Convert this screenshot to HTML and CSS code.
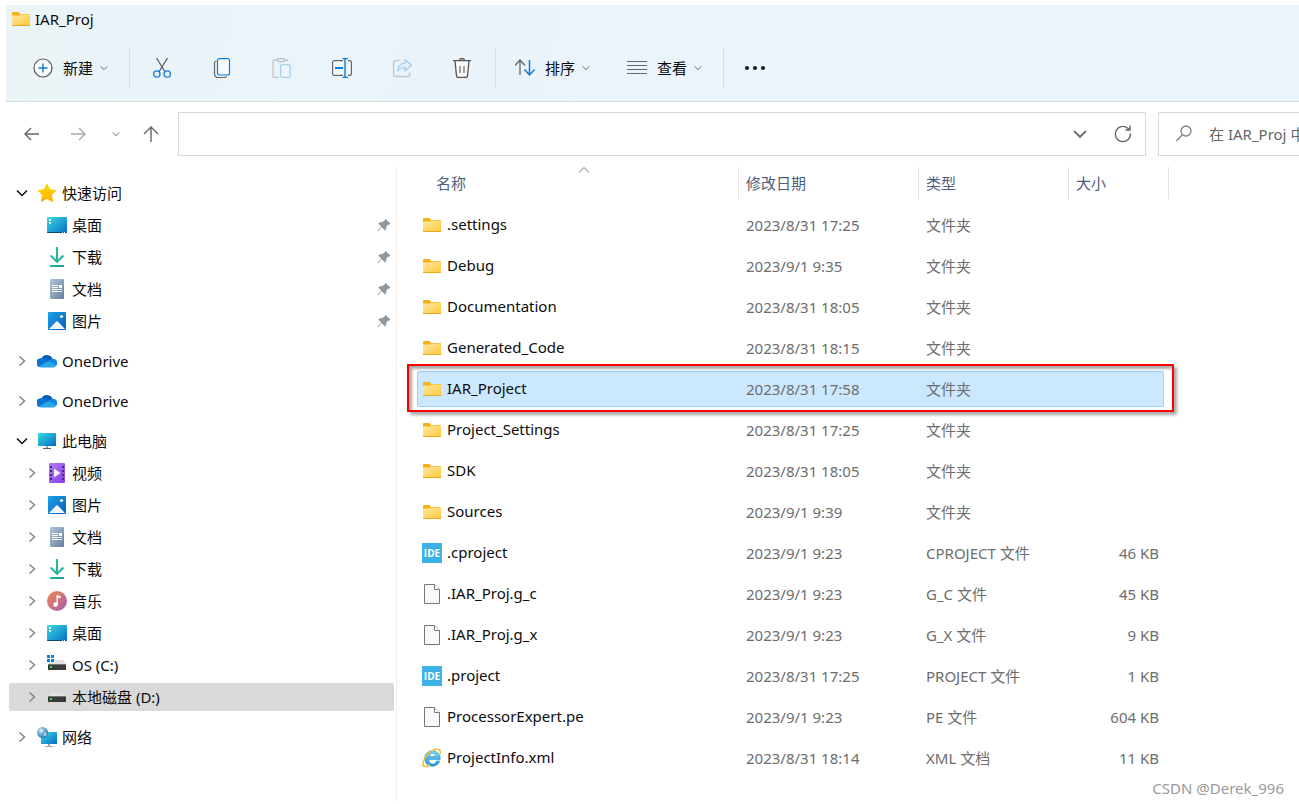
FILE: index.html
```html
<!DOCTYPE html>
<html lang="zh-CN">
<head>
<meta charset="utf-8">
<title>IAR_Proj</title>
<link rel="stylesheet" href="styles.css">
</head>
<body>
<svg class="defs" aria-hidden="true">
  <defs>
    <linearGradient id="gFolder" x1="0" y1="0" x2="1" y2="1"><stop offset="0" stop-color="#ffe9a6"/><stop offset="1" stop-color="#ffc93c"/></linearGradient>
    <linearGradient id="gScreen" x1="0" y1="0" x2="1" y2="1"><stop offset="0" stop-color="#36dbe6"/><stop offset="1" stop-color="#0b6cc4"/></linearGradient>
    <linearGradient id="gDown" x1="0" y1="0" x2="1" y2="1"><stop offset="0" stop-color="#3cc78a"/><stop offset="1" stop-color="#0f9fa6"/></linearGradient>
    <linearGradient id="gDoc" x1="0" y1="0" x2="1" y2="1"><stop offset="0" stop-color="#b3c5d8"/><stop offset="1" stop-color="#647f9f"/></linearGradient>
    <linearGradient id="gPic" x1="0" y1="0" x2="1" y2="1"><stop offset="0" stop-color="#1ba3ea"/><stop offset="1" stop-color="#0a5cb5"/></linearGradient>
    <linearGradient id="gStar" x1="0" y1="0" x2="0" y2="1"><stop offset="0" stop-color="#ffd900"/><stop offset="1" stop-color="#ffb000"/></linearGradient>
    <linearGradient id="gVideo" x1="0" y1="0" x2="1" y2="1"><stop offset="0" stop-color="#b67cf5"/><stop offset="1" stop-color="#8a3ee8"/></linearGradient>
    <linearGradient id="gMusic" x1="0" y1="0" x2="1" y2="1"><stop offset="0" stop-color="#f68a4c"/><stop offset="1" stop-color="#a05cb4"/></linearGradient>
    <radialGradient id="gGlobe" cx=".35" cy=".3" r=".8"><stop offset="0" stop-color="#b5dcf2"/><stop offset="1" stop-color="#1d6fa8"/></radialGradient>
    <linearGradient id="gIE" x1="0" y1="0" x2="0" y2="1"><stop offset="0" stop-color="#7fdcff"/><stop offset="1" stop-color="#2095dc"/></linearGradient>

    <symbol id="folder" viewBox="0 0 20 20"><path d="M1 4q0-1 1-1h5q1 0 1.400 1l.6 1h9.500q.5 0 .5.500V8H1z" fill="#f5b014"/><path d="M1 6.500h7l1.500-1H19V16H1z" fill="url(#gFolder)"/><path d="M1 16h18v1H1z" fill="#eba81a"/></symbol>
    <symbol id="star" viewBox="0 0 20 20"><path d="M10 1l2.700 5.800 6.300.8-4.700 4.300 1.300 6.600L10 15.300l-5.600 3.200 1.300-6.600L1 7.600l6.300-.8z" fill="url(#gStar)" stroke="url(#gStar)" stroke-linejoin="round"/></symbol>
    <symbol id="desktop" viewBox="0 0 20 20"><rect y="2" width="20" height="16" rx="1" fill="url(#gScreen)"/><path d="M0 17h20q0 1-1 1H1q-1 0-1-1z" fill="#074d78"/><path d="M2 4h2v2H2zM2 7h2v2H2z" fill="#fff"/><path d="M15 17h1v1h-1zM17 17h1v1h-1z" fill="#d4effa"/></symbol>
    <symbol id="download" viewBox="0 0 20 20"><path d="M9 0h2v12.500l4.700-4.700L17 9.200l-7 7-7-7 1.300-1.400L9 12.500zM3 18h14v2H3z" fill="url(#gDown)"/></symbol>
    <symbol id="doc" viewBox="0 0 20 20"><rect x="3" width="14" height="20" rx="1" fill="url(#gDoc)"/><path d="M5 6h6v1H5zM5 8h6v1H5zM12 6h3v3h-3zM5 10h10v1H5zM5 12h10v1H5z" fill="#fff"/></symbol>
    <symbol id="picture" viewBox="0 0 20 20"><rect x="1" y="1" width="18" height="18" rx="1" fill="url(#gPic)"/><path d="M2 18l7.200-7.400q.8-.7 1.600 0L18 18z" fill="#eef7ff"/><circle cx="14.500" cy="5.500" r="1.600" fill="#fff"/></symbol>
    <symbol id="cloud" viewBox="0 0 20 20"><path d="M4.500 7.500a6 6 0 0 1 11.200.8L9.500 12z" fill="#0560b6"/><path d="M4.500 7.200Q8 6.500 11.500 9.500L3 16.300A4.600 4.600 0 0 1 4.500 7.200z" fill="#0a73cf"/><path d="M10 10l5.500-2.300A4.300 4.300 0 0 1 19 15z" fill="#1489e0"/><path d="M2 15l9-4.500q5 2 8 4-1 2-3 2H5q-2 0-3-1.500z" fill="#28a4ea"/></symbol>
    <symbol id="pc" viewBox="0 0 20 20"><rect x="1" y="2" width="18" height="13" rx=".5" fill="url(#gScreen)"/><path d="M9 15h2v2H9z" fill="#9aa2a8"/><path d="M6 17h8v1H6z" fill="#4f6675"/></symbol>
    <symbol id="video" viewBox="0 0 20 20"><rect x="2" width="16" height="20" rx="1" fill="url(#gVideo)"/><path d="M3 3h2v2H3zM3 7h2v2H3zM3 11h2v2H3zM3 15h2v2H3zM15 3h2v2h-2zM15 7h2v2h-2zM15 11h2v2h-2zM15 15h2v2h-2z" fill="#4b2394"/><path d="M7 5.500l6.500 4.500L7 14.500z" fill="#f3eefb"/></symbol>
    <symbol id="music" viewBox="0 0 20 20"><circle cx="10" cy="10" r="10" fill="url(#gMusic)"/><path d="M9.500 4l4 1v2.500l-2.700-.7v6.700a2.200 2.200 0 1 1-1.300-2z" fill="#fff"/></symbol>
    <symbol id="drive" viewBox="0 0 20 20"><path d="M4 6h12l3 4H1z" fill="#e3e3e3"/><rect x="1" y="9" width="18" height="6" fill="#3c3c3c"/><path d="M1 9h18v1H1z" fill="#777"/><path d="M3 11h2v2H3z" fill="#2ee04a"/></symbol>
    <symbol id="osdrive" viewBox="0 0 20 20"><path d="M5 5h11l3 4H1z" fill="#e3e3e3"/><rect x="1" y="9" width="18" height="6" fill="#3c3c3c"/><path d="M1 9h18v1H1z" fill="#777"/><path d="M3 11h2v2H3z" fill="#2ee04a"/><path d="M0 0h3v3H0zM4 0h3v3H4zM0 4h3v3H0zM4 4h3v3H4z" fill="#0c83dc"/></symbol>
    <symbol id="network" viewBox="0 0 20 20"><rect x="4" y="5" width="16" height="12" rx=".5" fill="url(#gScreen)"/><path d="M11 17h2v2h-2zM8 19h8v1H8z" fill="#a0a8ae"/><circle cx="5.500" cy="5.500" r="5.500" fill="url(#gGlobe)"/><path d="M2 3q3-2 4 0t-2 3zM7 6q3-1 2.500 1.500T7 9z" fill="#d8eefa" opacity=".7"/></symbol>
    <symbol id="file" viewBox="0 0 20 20"><path d="M2.500.5h10l5 5v14h-15z" fill="#f9f9f9" stroke="#777"/><path d="M12.500.5v5h5" fill="#fff" stroke="#777"/></symbol>
    <symbol id="ie" viewBox="0 0 20 20"><path d="M14.300 13h3.500A7.800 7.800 0 1 1 18.200 9.800v1.600H7a3.400 3.400 0 0 0 7.300 1.600zM7 8.500h7.100a3.600 3.600 0 0 0-7.100 0z" fill="url(#gIE)" fill-rule="evenodd" stroke="#278fc9" stroke-width=".6"/><path d="M18 6.500C20-1 12 .5 6.500 5.500S-1 19 3 18.500c2 0 4-1 5-1.800" fill="none" stroke="#f3bd27" stroke-width="1.500"/></symbol>
    <symbol id="pin" viewBox="0 0 14 14"><path d="M8.500.7L13.300 5.500 12 6.700 10.500 7 9.200 9.800 9 11.700 8 12.500 4.700 9.300 1 13.300H.5v-.8l3.800-3.700L1.300 5.500l1-1 2-.2L7 3.200z" fill="#8e9aa3"/></symbol>
    <symbol id="right" viewBox="0 0 12 12"><path d="M3.500 1.500L8.500 6l-5 4.500" fill="none" stroke="#858585" stroke-width="1.500"/></symbol>
    <symbol id="down" viewBox="0 0 12 12"><path d="M1 3.500l5 5 5-5" fill="none" stroke="currentColor" stroke-width="1.500"/></symbol>
  </defs>
</svg>

<div class="window">
  <header class="ribbon">
    <h1 class="title"><svg class="icon"><use href="#folder"/></svg>IAR_Proj</h1>
    <div class="toolbar" role="toolbar" aria-label="命令">
      <button class="command command-new"><svg class="icon" viewBox="0 0 20 20" fill="none"><circle cx="10" cy="10" r="9" fill="#fafcfe" stroke="#555" stroke-width="1.200"/><path d="M10 5.500v9M5.500 10h9" stroke="#0a78d4" stroke-width="1.400"/></svg><span>新建</span><svg class="caret"><use href="#down"/></svg></button>
      <div class="tools">
        <button class="tool" aria-label="剪切"><svg class="icon" viewBox="0 0 20 20" fill="none"><path d="M4.500 0l8.300 13.500M15.500 0L7.200 13.500" stroke="#555" stroke-width="1.200"/><g stroke="#0a7ddb" stroke-width="1.300"><circle cx="4.800" cy="16" r="3.200"/><circle cx="15.200" cy="16" r="3.200"/></g></svg></button>
        <button class="tool" aria-label="复制"><svg class="icon" viewBox="0 0 20 20" fill="none"><path d="M4.500 3q-2 .5-2 2v10.500q0 4 4 4h6q1.500 0 2-1" stroke="#666" stroke-width="1.200"/><rect x="5.500" y=".6" width="12" height="16.400" rx="2" fill="#f8fafd" stroke="#0a7ddb" stroke-width="1.200"/></svg></button>
        <button class="tool" aria-label="粘贴" disabled><svg class="icon" viewBox="0 0 20 20" fill="none"><path d="M6 2H2.500Q1 2 1 3.500v14Q1 19.500 3 19.500h3.500M12 2h2.500Q16 2 16 4" stroke="#c1c6c9" stroke-width="1.300"/><rect x="5.500" y=".6" width="7" height="3" rx="1.500" stroke="#b5bbbf" stroke-width="1.200"/><rect x="8.600" y="6.600" width="9.500" height="12.800" rx="1.500" fill="#eff6fd" stroke="#a5cfee" stroke-width="1.300"/></svg></button>
        <button class="tool" aria-label="重命名"><svg class="icon" viewBox="0 0 20 20" fill="none"><path d="M11 2.600H2.500Q.6 2.600.6 4.500v11q0 1.900 1.900 1.900H11M16 2.600h1.500q1.900 0 1.900 1.900v11q0 1.900-1.900 1.900H16" stroke="#666" stroke-width="1.200" fill="#f6f9fc"/><path d="M3 10h8" stroke="#0a7ddb" stroke-width="2"/><path d="M13 .6v18.800M10.500.6h5.500M10.500 19.400h5.500" stroke="#0a7ddb" stroke-width="1.400"/></svg></button>
        <button class="tool" aria-label="共享" disabled><svg class="icon" viewBox="0 0 20 20" fill="none"><path d="M7.500 2.600h-4Q1.600 2.600 1.600 4.500v12q0 2 2 2h12q2 0 2-2v-2" stroke="#c1c6c9" stroke-width="1.300"/><path d="M13 1.500l6.500 5.700L13 13V9.500q-4.500 0-7.500 3.500Q6.500 5.500 13 5z" fill="#e4f1fc" stroke="#9ccbed" stroke-width="1.200" stroke-linejoin="round"/></svg></button>
        <button class="tool" aria-label="删除"><svg class="icon" viewBox="0 0 20 20" fill="none"><path d="M3 2.800l1.500 15q.2 1.600 1.800 1.600h7.400q1.600 0 1.800-1.600L17 2.800" fill="#fafafa" stroke="#555" stroke-width="1.300"/><path d="M1 2.700h18M7.500 2.500q.2-2 2.500-2t2.500 2" stroke="#555" stroke-width="1.300"/><path d="M8 8v7M12 8v7" stroke="#666" stroke-width="1.200"/></svg></button>
      </div>
      <div class="menus">
        <button class="command"><svg class="icon" viewBox="0 0 20 20" fill="none"><path d="M5 17V2M0 7.500L5 2l5 5.500" stroke="#666" stroke-width="1.300"/><path d="M14.500 2v15M9.500 11.500l5 5.500 5-5.500" stroke="#0a7ddb" stroke-width="1.500"/></svg><span>排序</span><svg class="caret"><use href="#down"/></svg></button>
        <button class="command"><svg class="icon" viewBox="0 0 20 20"><path d="M0 3.500h20M0 7.500h20M0 11.500h20M0 15.500h20" stroke="#666" stroke-width="1.200"/></svg><span>查看</span><svg class="caret"><use href="#down"/></svg></button>
      </div>
      <button class="more" aria-label="更多"><svg class="icon" viewBox="0 0 20 20"><g fill="#1b1b1b"><circle cx="2" cy="10" r="2"/><circle cx="10" cy="10" r="2"/><circle cx="18" cy="10" r="2"/></g></svg></button>
    </div>
  </header>

  <nav class="navbar" aria-label="导航">
    <div class="history">
      <button class="navigate" aria-label="后退"><svg class="icon" viewBox="0 0 20 20" fill="none" stroke="#666" stroke-width="1.400"><path d="M17 10H3M9 4l-6 6 6 6"/></svg></button>
      <button class="navigate" aria-label="前进"><svg class="icon" viewBox="0 0 20 20" fill="none" stroke="#aaa" stroke-width="1.400"><path d="M3 10h14M11 4l6 6-6 6"/></svg></button>
      <button class="navigate narrow" aria-label="最近的位置"><svg class="caret"><use href="#down"/></svg></button>
      <button class="navigate narrow" aria-label="向上"><svg class="icon" viewBox="0 0 20 20" fill="none" stroke="#666" stroke-width="1.400"><path d="M10 18V3M3 10l7-7 7 7"/></svg></button>
    </div>
    <div class="address">
      <input class="path" type="text" aria-label="地址">
      <button class="plain" aria-label="展开地址"><svg class="chevron"><use href="#down"/></svg></button>
      <button class="plain" aria-label="刷新"><svg class="icon" viewBox="0 0 20 20" fill="none" stroke="#666" stroke-width="1.400"><path d="M17.500 9.500a7.600 7.600 0 1 1-2.700-5.300L17 6M17 1.500V6h-4.500"/></svg></button>
    </div>
    <label class="search"><svg class="icon" viewBox="0 0 20 20" fill="none" stroke="#808080" stroke-width="1.300"><circle cx="12" cy="7" r="5"/><path d="M8.500 10.500L2.500 17"/></svg><input class="query" type="text" placeholder="在 IAR_Proj 中搜索" aria-label="搜索"></label>
  </nav>

  <div class="content">
    <aside class="sidebar">
      <ul class="group">
        <li class="node open"><svg class="toggle"><use href="#down"/></svg><svg class="icon"><use href="#star"/></svg>快速访问</li>
        <li class="node child"><svg class="toggle"></svg><svg class="icon"><use href="#desktop"/></svg>桌面<svg class="pin"><use href="#pin"/></svg></li>
        <li class="node child"><svg class="toggle"></svg><svg class="icon"><use href="#download"/></svg>下载<svg class="pin"><use href="#pin"/></svg></li>
        <li class="node child"><svg class="toggle"></svg><svg class="icon"><use href="#doc"/></svg>文档<svg class="pin"><use href="#pin"/></svg></li>
        <li class="node child"><svg class="toggle"></svg><svg class="icon"><use href="#picture"/></svg>图片<svg class="pin"><use href="#pin"/></svg></li>
      </ul>
      <ul class="group">
        <li class="node"><svg class="toggle"><use href="#right"/></svg><svg class="icon"><use href="#cloud"/></svg>OneDrive</li>
      </ul>
      <ul class="group">
        <li class="node"><svg class="toggle"><use href="#right"/></svg><svg class="icon"><use href="#cloud"/></svg>OneDrive</li>
      </ul>
      <ul class="group">
        <li class="node open"><svg class="toggle"><use href="#down"/></svg><svg class="icon"><use href="#pc"/></svg>此电脑</li>
        <li class="node child"><svg class="toggle"><use href="#right"/></svg><svg class="icon"><use href="#video"/></svg>视频</li>
        <li class="node child"><svg class="toggle"><use href="#right"/></svg><svg class="icon"><use href="#picture"/></svg>图片</li>
        <li class="node child"><svg class="toggle"><use href="#right"/></svg><svg class="icon"><use href="#doc"/></svg>文档</li>
        <li class="node child"><svg class="toggle"><use href="#right"/></svg><svg class="icon"><use href="#download"/></svg>下载</li>
        <li class="node child"><svg class="toggle"><use href="#right"/></svg><svg class="icon"><use href="#music"/></svg>音乐</li>
        <li class="node child"><svg class="toggle"><use href="#right"/></svg><svg class="icon"><use href="#desktop"/></svg>桌面</li>
        <li class="node child"><svg class="toggle"><use href="#right"/></svg><svg class="icon"><use href="#osdrive"/></svg>OS (C:)</li>
        <li class="node child current"><svg class="toggle"><use href="#right"/></svg><svg class="icon"><use href="#drive"/></svg>本地磁盘 (D:)</li>
      </ul>
      <ul class="group">
        <li class="node"><svg class="toggle"><use href="#right"/></svg><svg class="icon"><use href="#network"/></svg>网络</li>
      </ul>
    </aside>

    <main class="listing">
      <table class="files">
        <colgroup><col class="col-name"><col class="col-date"><col class="col-type"><col class="col-size"></colgroup>
        <thead>
          <tr>
            <th scope="col"><div class="heading first">名称<svg class="sorted" viewBox="0 0 12 12" fill="none" stroke="#777"><path d="M1 8.500l5-5 5 5"/></svg></div></th>
            <th scope="col"><div class="heading">修改日期</div></th>
            <th scope="col"><div class="heading">类型</div></th>
            <th scope="col"><div class="heading">大小</div></th>
          </tr>
        </thead>
        <tbody>
          <tr><td class="name"><svg class="icon"><use href="#folder"/></svg>.settings</td><td>2023/8/31 17:25</td><td>文件夹</td><td class="size"></td></tr>
          <tr><td class="name"><svg class="icon"><use href="#folder"/></svg>Debug</td><td>2023/9/1 9:35</td><td>文件夹</td><td class="size"></td></tr>
          <tr><td class="name"><svg class="icon"><use href="#folder"/></svg>Documentation</td><td>2023/8/31 18:05</td><td>文件夹</td><td class="size"></td></tr>
          <tr><td class="name"><svg class="icon"><use href="#folder"/></svg>Generated_Code</td><td>2023/8/31 18:15</td><td>文件夹</td><td class="size"></td></tr>
          <tr class="selected"><td class="name"><svg class="icon"><use href="#folder"/></svg>IAR_Project</td><td>2023/8/31 17:58</td><td>文件夹</td><td class="size"></td></tr>
          <tr><td class="name"><svg class="icon"><use href="#folder"/></svg>Project_Settings</td><td>2023/8/31 17:25</td><td>文件夹</td><td class="size"></td></tr>
          <tr><td class="name"><svg class="icon"><use href="#folder"/></svg>SDK</td><td>2023/8/31 18:05</td><td>文件夹</td><td class="size"></td></tr>
          <tr><td class="name"><svg class="icon"><use href="#folder"/></svg>Sources</td><td>2023/9/1 9:39</td><td>文件夹</td><td class="size"></td></tr>
          <tr><td class="name"><span class="icon ide">IDE</span>.cproject</td><td>2023/9/1 9:23</td><td>CPROJECT 文件</td><td class="size">46 KB</td></tr>
          <tr><td class="name"><svg class="icon"><use href="#file"/></svg>.IAR_Proj.g_c</td><td>2023/9/1 9:23</td><td>G_C 文件</td><td class="size">45 KB</td></tr>
          <tr><td class="name"><svg class="icon"><use href="#file"/></svg>.IAR_Proj.g_x</td><td>2023/9/1 9:23</td><td>G_X 文件</td><td class="size">9 KB</td></tr>
          <tr><td class="name"><span class="icon ide">IDE</span>.project</td><td>2023/8/31 17:25</td><td>PROJECT 文件</td><td class="size">1 KB</td></tr>
          <tr><td class="name"><svg class="icon"><use href="#file"/></svg>ProcessorExpert.pe</td><td>2023/9/1 9:23</td><td>PE 文件</td><td class="size">604 KB</td></tr>
          <tr><td class="name"><svg class="icon"><use href="#ie"/></svg>ProjectInfo.xml</td><td>2023/8/31 18:14</td><td>XML 文档</td><td class="size">11 KB</td></tr>
        </tbody>
      </table>
    </main>
  </div>
  <p class="credit">CSDN @Derek_996</p>
</div>
</body>
</html>
```
FILE: styles.css
```css
* { box-sizing: border-box; }

body {
  margin: 0;
  background: #fff;
  color: #0c0c0c;
  font: 15px/20px "Noto Sans", "Noto Sans CJK SC", sans-serif;
}

button, input {
  margin: 0;
  padding: 0;
  border: 0;
  background: none;
  color: inherit;
  font: inherit;
}

.defs { position: absolute; width: 0; height: 0; }

.window {
  position: relative;
  display: flex;
  flex-direction: column;
  min-height: 100vh;
  padding: 5px 0 2px 6px;
  overflow: hidden;
}

.icon { flex: none; width: 20px; height: 20px; }
.caret { flex: none; width: 8px; height: 8px; color: #666; }
.chevron { display: block; width: 14px; height: 14px; color: #666; }

/* Ribbon */
.ribbon {
  background: linear-gradient(100deg, #eaf4f7, #ebf3fb 50%, #ebf3fb);
  border-bottom: 1px solid #d5e0e5;
}

.title {
  display: flex;
  align-items: center;
  gap: 4px;
  height: 28px;
  margin: 0;
  padding-left: 5px;
  font-size: 15px;
  font-weight: 400;
}

.toolbar { display: flex; align-items: center; height: 68px; padding-top: 2px; }

.command { display: flex; align-items: center; }
.command span { margin: 0 7px 0 10px; }
.command-new { padding: 0 21px 0 27px; }

.tools, .menus {
  display: flex;
  align-items: center;
  height: 40px;
  border-left: 1px solid #d7dfe5;
}
.tools { gap: 40px; padding: 0 23px 0 22px; }
.tool { height: 20px; }
.menus { gap: 37px; padding: 0 21px 0 19px; border-right: 1px solid #d7dfe5; }
.more { height: 20px; margin-left: 21px; }

/* Address bar */
.navbar { display: flex; align-items: center; padding: 10px 0 11px; }
.history { display: flex; align-items: center; width: 172px; padding-left: 3px; }
.navigate { display: flex; justify-content: center; align-items: center; width: 46px; height: 32px; }
.navigate.narrow { width: 30px; margin-right: 5px; }

.address {
  display: flex;
  align-items: center;
  flex: 1;
  gap: 26px;
  height: 44px;
  padding: 0 12px;
  border: 1px solid #d9d9d9;
}
.path { flex: 1; min-width: 0; }
.plain { display: flex; }

.search {
  display: flex;
  align-items: center;
  gap: 15px;
  width: 141px;
  height: 44px;
  margin-left: 12px;
  padding-left: 15px;
  border: 1px solid #d9d9d9;
  border-right: 0;
}
.query { flex: 1; min-width: 0; }
.query::placeholder { color: #666; opacity: 1; }

/* Folder tree */
.content { display: flex; flex: 1; }

.sidebar {
  flex: none;
  width: 391px;
  padding: 10px 2px 0 3px;
  border-right: 1px solid #f0f0f0;
}
.group { margin: 0 0 8px; padding: 2px 0; list-style: none; }
.node {
  display: flex;
  align-items: center;
  gap: 5px;
  height: 28px;
  margin: 4px 0;
  padding: 0 3px 0 7px;
  border-radius: 2px;
}
.group .node:first-child { margin-top: 0; }
.group .node:last-child { margin-bottom: 0; }
.node.child { padding-left: 17px; }
.current { background: #d9d9d9; }
.toggle { flex: none; width: 12px; height: 12px; margin-right: 4px; }
.pin { width: 14px; height: 14px; margin-left: auto; }

/* File table */
.listing { flex: 1; padding-left: 20px; }
.files { width: 752px; table-layout: fixed; border-collapse: collapse; }
.col-name { width: 322px; }
.col-date { width: 180px; }
.col-type { width: 150px; }
.col-size { width: 100px; }

th { padding: 0 0 5px; font-weight: 400; text-align: left; color: #4c607a; }
.heading {
  position: relative;
  height: 32px;
  padding: 6px 0 6px 7px;
  border-right: 1px solid #e2e2e2;
}
.heading.first { padding-left: 19px; }
.sorted { position: absolute; top: -3px; left: 50%; width: 12px; height: 12px; }

td { height: 41px; padding: 0 10px 0 7px; color: #6d6d6d; white-space: nowrap; }
td.name { padding-left: 5px; color: #0c0c0c; }
.name .icon { display: inline-block; margin-right: 5px; vertical-align: middle; }
.size { text-align: right; }

.ide {
  background: #3cb1e5;
  color: #fff;
  font: 700 10px/20px "Open Sans", sans-serif;
  text-align: center;
}

.selected { position: relative; z-index: 0; }
.selected .name::before {
  content: "";
  position: absolute;
  z-index: -1;
  inset: 3px 5px 2px 0;
  background: #cce8ff;
  border: 1px solid #99d1ff;
  border-radius: 2px;
}
.selected .name::after {
  content: "";
  position: absolute;
  inset: -4px -5px -3px -10px;
  border: 2px solid #f00;
  box-shadow: 3px 3px 3px #0005, inset 3px 3px 3px #0005;
}

.credit {
  position: absolute;
  right: 15px;
  bottom: 6px;
  margin: 0;
  font-size: 15px;
  color: #999;
}
```
